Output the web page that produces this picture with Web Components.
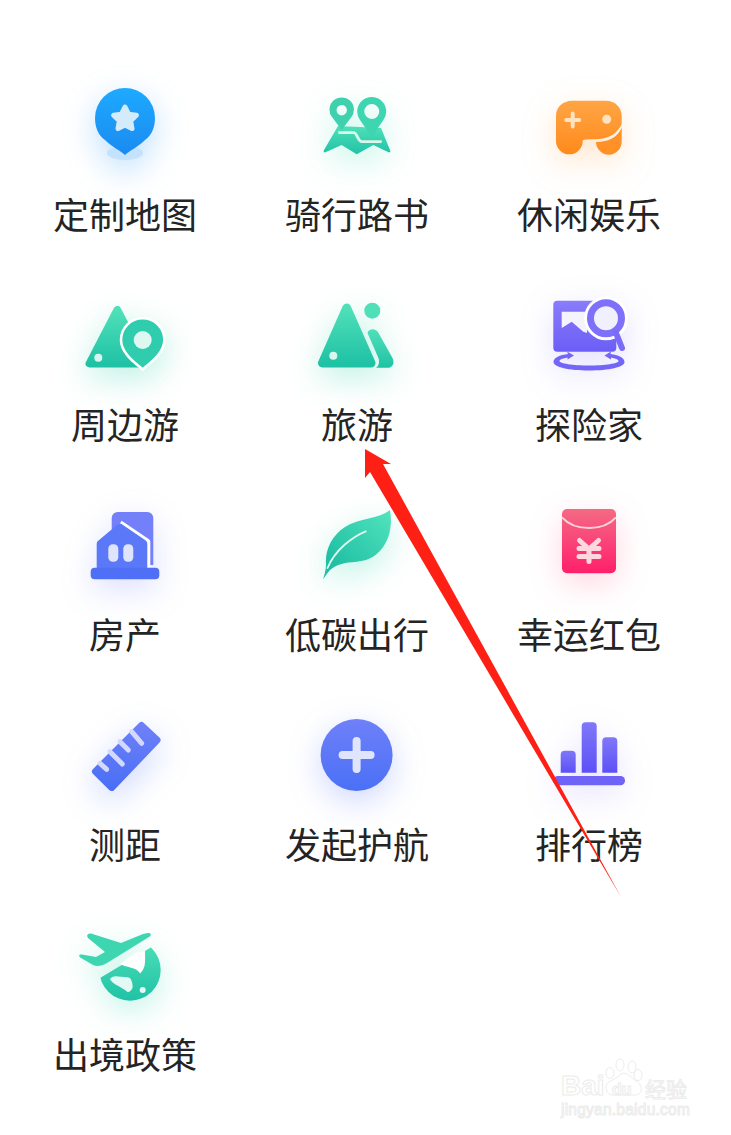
<!DOCTYPE html>
<html lang="zh">
<head>
<meta charset="utf-8">
<title>menu</title>
<style>
    html, body { margin: 0; background: #fff; }
    body { position: relative; width: 731px; height: 1135px; overflow: hidden; }
</style>
</head>
<body>
<app-grid>
    <menu-item icon="pin" glow="40,150,250,.3">定制地图</menu-item>
    <menu-item icon="map" glow="70,225,185,.3">骑行路书</menu-item>
    <menu-item icon="game" glow="255,160,60,.26">休闲娱乐</menu-item>
    <menu-item icon="hill" glow="50,210,170,.32">周边游</menu-item>
    <menu-item icon="travel" glow="50,210,170,.32">旅游</menu-item>
    <menu-item icon="explore" glow="120,105,250,.2">探险家</menu-item>
    <menu-item icon="house" glow="90,110,250,.22">房产</menu-item>
    <menu-item icon="leaf" glow="50,215,175,.3">低碳出行</menu-item>
    <menu-item icon="packet" glow="255,70,120,.22">幸运红包</menu-item>
    <menu-item icon="ruler" glow="80,110,250,.28">测距</menu-item>
    <menu-item icon="plus" glow="80,110,250,.28">发起护航</menu-item>
    <menu-item icon="bars" glow="110,95,250,.2">排行榜</menu-item>
    <menu-item icon="plane" glow="60,220,180,.3">出境政策</menu-item>
</app-grid>
<baidu-mark></baidu-mark>
<arrow-mark></arrow-mark>

<script>
const grad = (a, b) => `<defs><linearGradient id="g" x1="0" y1="0" x2="0" y2="1"><stop offset="0" stop-color="${a}"/><stop offset="1" stop-color="${b}"/></linearGradient></defs>`;
const TEAL = grad('#4fe0b8', '#20c2a6');

const ICONS = {
    pin: grad('#1eaaff', '#1a8af0') + `
        <ellipse cx="40" cy="68" rx="18" ry="7" fill="#c4e2fb"/>
        <path fill="url(#g)" d="M40 70C36 66 27 62 20 55C13 50 10 42 10 33A30 30 0 0 1 70 33C70 42 67 50 60 55C53 62 44 66 40 70Z"/>
        <polygon points="40,22 43.6,29.2 51.4,30.3 45.7,35.8 47,43.6 40,40 33,43.6 34.3,35.8 28.6,30.3 36.4,29.2" fill="#d3ebfb" stroke="#d3ebfb" stroke-width="5" stroke-linejoin="round"/>`,
    map: TEAL + `
        <path fill="url(#g)" d="M21 41L7 65C6 67 7 68 9 67L24.7 60L39.7 69.3L56.3 60L71 67C73 68 74 67 73 65L64 43Z"/>
        <path fill="none" stroke="#d8f6ea" stroke-width="2.8" d="M21.3 47.7H37C40 48 41 56.7 45 56.7H64.7"/>
        <path fill="#3fd0ae" fill-rule="evenodd" d="M24.7 45L15 32A12.2 12.2 0 1 1 34.4 32ZM24.7 20A5.2 5.2 0 1 0 24.8 30.4A5.2 5.2 0 0 0 24.7 20Z"/>
        <path fill="#3ed6b0" fill-rule="evenodd" d="M54.7 52L43 35A14.5 14.5 0 1 1 66.4 35ZM54.7 19A7.5 7.5 0 1 0 54.8 34A7.5 7.5 0 0 0 54.7 19Z"/>`,
    game: grad('#ffa544', '#ff8a1c') + `
        <path fill="url(#g)" d="M23 15.7H57C66 15.7 72.7 22.5 72.7 31V39C69 47 62 53 50 54C40 54.5 33.7 54 33.7 56A13.35 13.35 0 0 1 7 56V31C7 22 14 15.7 23 15.7Z"/>
        <path fill="#ff9128" d="M72.7 42.5V56A12.85 13.35 0 0 1 47 57C60 57 69 52 72.7 42.5Z"/>
        <path stroke="#ffe2bf" stroke-width="4" stroke-linecap="round" d="M23.7 28.5V41.5M17.2 35H30.2"/>
        <circle cx="57.7" cy="34.3" r="4.5" fill="#ffe2bf"/>`,
    hill: TEAL + `
        <polygon points="32.3,15 4.6,68.5 60,68.5" fill="url(#g)" stroke="url(#g)" stroke-width="8" stroke-linejoin="round"/>
        <circle cx="13.3" cy="62.7" r="4" fill="#d8f6ee"/>
        <path fill="#2fcdae" stroke="#fff" stroke-width="2.6" fill-rule="evenodd" d="M57.7 74.5C50 68 36 58 36 45A21.7 21.7 0 1 1 79.4 45C79.4 58 65 68 57.7 74.5Z"/>
        <circle cx="57.7" cy="45" r="9" fill="#dcf8f0"/>`,
    travel: TEAL + `
        <polygon points="29.7,13 5.5,68 54,68" fill="url(#g)" stroke="url(#g)" stroke-width="9" stroke-linejoin="round"/>
        <path fill="url(#g)" d="M50.5 38C52 33 59 33 61.5 38L75.5 63C78 68 75.5 72.7 71 72.7H59C62 71 63 66 61 62Z"/>
        <circle cx="55.3" cy="15.7" r="8" fill="#4fe0b8"/>
        <circle cx="16.3" cy="60.7" r="4" fill="#d8f6ee"/>`,
    explore: grad('#8a7cfa', '#6c5ef6') + `
        <rect x="4.3" y="5.7" width="63" height="51" rx="4" fill="url(#g)"/>
        <path fill="#f4f3fe" d="M12.7 16.7H38V38L34.3 36.7L22.7 26.7L12.7 33Z"/>
        <circle cx="57" cy="23.3" r="22" fill="#fff"/>
        <circle cx="57" cy="23.3" r="15.5" fill="#f1f0fe" stroke="#7e70f9" stroke-width="7"/>
        <path stroke="#7a6cf8" stroke-width="6" stroke-linecap="round" d="M67 38L73 53"/>
        <path fill="#7365f7" d="M4.5 67C4.5 62.5 11 60 19 59L18 56.5L25 60.5L18.5 64.5L18.5 62.5C13.5 63.5 10.5 64.5 10.5 66C10.5 68.5 24 70.5 40 70.5C56 70.5 69.5 68.5 69.5 66C69.5 64.5 66.5 63.5 62 62.5L62 64.5L55.5 60.5L62 56.5L61.5 59C69 60 75.5 62.5 75.5 67C75.5 72 60 75.5 40 75.5C20 75.5 4.5 72 4.5 67Z"/>`,
    house: `
        <path fill="#7480fa" d="M26.7 13A6 6 0 0 1 32.7 7H62.3A6 6 0 0 1 68.3 13V60H26.7Z"/>
        <path fill="none" stroke="#fff" stroke-width="6" stroke-linejoin="round" d="M35 18.3L62.3 36.7V66"/>
        <path fill="#5a78f7" d="M32 20C34 18 36 18 38 20L60 35C61.500 36 62.300 37 62.300 39V66H11.700V39C11.700 37.500 12.300 36.500 13.500 35.500Z"/>
        <rect x="5.7" y="62.7" width="68.6" height="11.6" rx="4" fill="#4f70f6"/>
        <rect x="23.3" y="39.3" width="10" height="17.4" rx="4.5" fill="#dfe4fb"/>
        <rect x="38.3" y="39.3" width="10" height="17.4" rx="4.5" fill="#dfe4fb"/>`,
    leaf: `<defs><linearGradient id="g" x1="1" y1="0" x2="0" y2="1"><stop offset="0" stop-color="#52e4bd"/><stop offset=".8" stop-color="#20c0a4"/></linearGradient></defs>
        <path fill="url(#g)" d="M73 5C62 14 42 13 28 22C14 31 8 46 9 59C9 65 7.5 70 6 74C8 72 10 68 13 65C22 57 32 58 44 56C62 54 78 34 73 5Z"/>
        <path fill="none" stroke="#e2f9f2" stroke-width="1.8" stroke-linecap="round" d="M48.7 26.3C35 32 18 45 10.5 63"/>`,
    packet: grad('#f46a84', '#ff1f6c') + `
        <rect x="13" y="4" width="54" height="64.3" rx="5" fill="url(#g)"/>
        <path fill="none" stroke="#fbd3da" stroke-width="2" d="M13 12.3C20 20 30 23 40 23C50 23 60 20 67 12.3"/>
        <path fill="none" stroke="#ffd7de" stroke-width="5" stroke-linecap="round" stroke-linejoin="round" d="M30.5 35.5L40 44L49.5 35.5M40 44V56.5M30 43.5H50M30 51.5H50"/>`,
    ruler: grad('#6e80f8', '#4a6ff5') + `
        <polygon points="56.5,10.5 72,25 26.7,72.5 10.5,56.5" fill="url(#g)" stroke="url(#g)" stroke-width="7" stroke-linejoin="round"/>
        <path stroke="#d2d9fc" stroke-width="5" stroke-linecap="round" d="M46.7 16.7L56.7 28.3M35 26.7L43.3 35M25 36.7L37.3 49M15 48.3L21.7 54.3"/>`,
    plus: grad('#6f80f9', '#4a70f6') + `
        <circle cx="39.6" cy="40" r="36" fill="url(#g)"/>
        <path stroke="#dfe5fd" stroke-width="8" stroke-linecap="round" d="M39.6 26V54M25.6 40H53.6"/>`,
    bars: grad('#8078f9', '#5c50f6') + `
        <path fill="url(#g)" d="M11.7 39.7a4 4 0 0 1 4-4h7a4 4 0 0 1 4 4V57.7H11.7Z"/>
        <path fill="url(#g)" d="M32.7 11.3a4 4 0 0 1 4-4h7a4 4 0 0 1 4 4V57.7H32.7Z"/>
        <path fill="url(#g)" d="M53.3 26.3a4 4 0 0 1 4-4h7a4 4 0 0 1 4 4V57.7H53.3Z"/>
        <rect x="4.3" y="61" width="71.7" height="9.3" rx="4.6" fill="#6f62f7"/>`,
    plane: TEAL + `
        <clipPath id="c"><polygon points="0,62 70,20 90,20 90,90 0,90"/></clipPath>
        <circle cx="45" cy="45" r="30.7" fill="url(#g)" clip-path="url(#c)"/>
        <path fill="#e4f9f3" d="M25 54C27 51 31 51 33 51.500C37 52 42 51.500 45 53C47 55.500 48 60 47.500 63C46 66 44 67.500 42.500 67C40.500 64.500 37 63.500 35 62C31 59.500 27 58 25 54Z"/>
        <path fill="#fff" d="M35 39C38 41 45 42 50 44C52 45 54 46.500 55 48.500C57 46.500 58.500 44 59.500 41C60.500 37 60 30 60 26L50 28Z"/>
        <circle cx="57.7" cy="65" r="3" fill="#e4f9f3"/>
        <path fill="#3ed6b0" d="M63 8C66 8 67 10 64 12L22 38C17 41 12 42 8 40L-4 33C-7 31 -6 29 -3 29.5L11 32L20 27L3 13C1 10 3 8 6 8.5L36 18L58 9Z"/>`
};

class AppGrid extends HTMLElement {
    constructor() {
        super();
        this.attachShadow({ mode: 'open' }).innerHTML = `
            <style>
                :host {
                    display: grid;
                    grid-template-columns: repeat(3, 232px);
                    grid-auto-rows: 210px;
                    padding: 85px 0 0 9px;
                    font-family: "Noto Sans CJK SC", "Noto Sans", sans-serif;
                    color: #242424;
                }
            </style>
            <slot></slot>
        `;
    }
}

class MenuItem extends HTMLElement {
    constructor() {
        super();
        const name = this.getAttribute('icon');
        const glow = this.getAttribute('glow');
        this.attachShadow({ mode: 'open' }).innerHTML = `
            <style>
                :host {
                    display: flex;
                    flex-direction: column;
                    align-items: center;
                    gap: 28px;
                }
                svg {
                    width: 80px;
                    height: 80px;
                    overflow: visible;
                    filter: drop-shadow(0 10px 16px rgba(${glow}));
                }
                .label {
                    font-size: 36px;
                    line-height: 40px;
                    white-space: nowrap;
                }
            </style>
            <svg viewBox="0 0 80 80">${ICONS[name]}</svg>
            <div class="label"><slot></slot></div>
        `;
    }
}

// faint watermark, bottom right corner
class BaiduMark extends HTMLElement {
    constructor() {
        super();
        this.attachShadow({ mode: 'open' }).innerHTML = `
            <style>
                :host {
                    position: absolute;
                    left: 558px;
                    top: 1052px;
                    width: 140px;
                    height: 70px;
                    color: #fff;
                    -webkit-text-stroke: 1px #ececec;
                    font-family: "Liberation Sans", sans-serif;
                }
                .t { position: absolute; white-space: nowrap; }
                svg { position: absolute; left: 46px; top: 5px; width: 40px; height: 42px; }
            </style>
            <svg viewBox="0 0 40 42" fill="#fff" stroke="#ececec" stroke-width="1">
                <ellipse cx="16" cy="8" rx="4" ry="6"/>
                <ellipse cx="28" cy="10" rx="4" ry="6"/>
                <ellipse cx="6" cy="16" rx="4" ry="5.5"/>
                <ellipse cx="34" cy="18" rx="4" ry="5.5"/>
                <path d="M2 30C2 24 12 23 17 17C22 14 27 20 32 24C39 28 40 38 30 38C24 38 14 38 9 38C4 38 2 34 2 30Z"/>
            </svg>
            <span class="t" style="left:3px;top:18px;font-size:28px;font-weight:700">Bai</span>
            <span class="t" style="left:54px;top:29px;font-size:16px;font-weight:700">du</span>
            <span class="t" style="left:87px;top:21px;font-size:21px;font-family:'Noto Sans CJK SC',sans-serif">经验</span>
            <span class="t" style="left:3px;top:49px;font-size:15.6px;letter-spacing:.2px">jingyan.baidu.com</span>
        `;
    }
}

class ArrowMark extends HTMLElement {
    constructor() {
        super();
        this.attachShadow({ mode: 'open' }).innerHTML = `
            <style>
                :host { position: absolute; left: 0; top: 0; width: 731px; height: 1135px; pointer-events: none; }
                svg { display: block; }
            </style>
            <svg width="731" height="1135" viewBox="0 0 731 1135">
                <polygon fill="#ff2015" points="365,449 391,464 383,464 621,897 370,472 365,478"/>
            </svg>
        `;
    }
}

customElements.define('app-grid', AppGrid);
customElements.define('menu-item', MenuItem);
customElements.define('baidu-mark', BaiduMark);
customElements.define('arrow-mark', ArrowMark);
</script>
</body>
</html>
